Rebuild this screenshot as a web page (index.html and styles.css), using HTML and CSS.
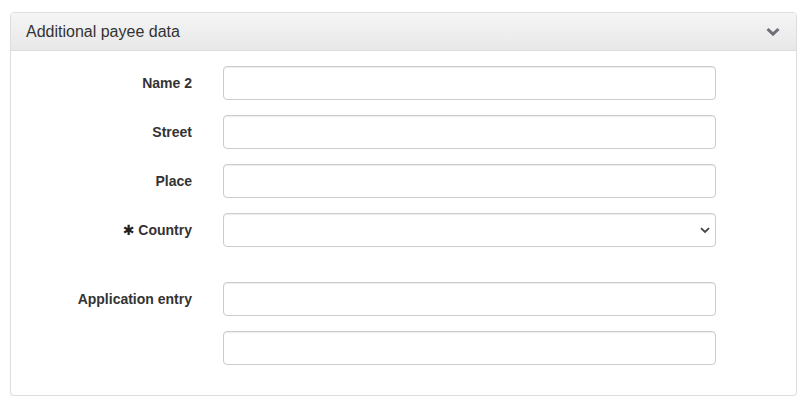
FILE: index.html
```html
<!DOCTYPE html>
<html>
<head>
<meta charset="utf-8">
<link rel="stylesheet" href="styles.css">
</head>
<body>
<div class="panel">
  <div class="panel-heading">
    <span class="panel-title">Additional payee data</span>
    <svg class="toggle" width="14" height="10" viewBox="0 0 14 10"><path d="M1.5 2 L7 7.2 L12.5 2" fill="none" stroke="#6f6f78" stroke-width="3"/></svg>
  </div>
  <div class="panel-body">
    <div class="form-row">
      <label class="lbl">Name 2</label>
      <input class="ctl" type="text">
    </div>
    <div class="form-row">
      <label class="lbl">Street</label>
      <input class="ctl" type="text">
    </div>
    <div class="form-row">
      <label class="lbl">Place</label>
      <input class="ctl" type="text">
    </div>
    <div class="form-row gap-after">
      <label class="lbl"><span class="req">✱</span> Country</label>
      <div class="select-wrap">
        <select class="ctl sel"><option></option></select>
        <svg class="sel-arrow" width="10" height="7" viewBox="0 0 10 7"><path d="M1 1.2 L5 5 L9 1.2" fill="none" stroke="#444" stroke-width="1.8"/></svg>
      </div>
    </div>
    <div class="form-row">
      <label class="lbl">Application entry</label>
      <input class="ctl" type="text">
    </div>
    <div class="form-row">
      <span class="lbl"></span>
      <input class="ctl" type="text">
    </div>
  </div>
</div>
</body>
</html>
```
FILE: styles.css
```css
html, body {
  margin: 0;
  padding: 0;
  background: #fff;
}
body {
  padding: 12px 8px 0 10px;
  font-family: "Liberation Sans", Arial, sans-serif;
  color: #333;
  font-size: 14px;
}
.panel {
  width: 787px;
  box-sizing: border-box;
  border: 1px solid #ddd;
  border-radius: 4px;
  box-shadow: 0 1px 1px rgba(0,0,0,.05);
  background: #fff;
}
.panel-heading {
  display: flex;
  align-items: center;
  justify-content: space-between;
  height: 38px;
  padding: 0 15px;
  box-sizing: border-box;
  background: linear-gradient(to bottom, #f5f5f5 0%, #e8e8e8 100%);
  border-bottom: 1px solid #ddd;
  border-top-left-radius: 3px;
  border-top-right-radius: 3px;
}
.panel-title {
  font-size: 16px;
  color: #333;
  padding-top: 1px;
}
.toggle {
  margin-right: 1px;
  margin-top: 1px;
}
.panel-body {
  padding: 15px 15px 15px 15px;
}
.form-row {
  display: grid;
  grid-template-columns: 166px 493px;
  column-gap: 31px;
  align-items: center;
  margin-bottom: 15px;
}
.form-row.gap-after {
  margin-bottom: 35px;
}
.lbl {
  text-align: right;
  font-weight: bold;
  font-size: 14px;
  color: #333;
}
.req {
  font-family: "DejaVu Sans", sans-serif;
  font-size: 14px;
  font-weight: bold;
  color: #222;
}
.ctl {
  display: block;
  width: 493px;
  height: 34px;
  box-sizing: border-box;
  border: 1px solid #ccc;
  border-radius: 4px;
  background: #fff;
  box-shadow: inset 0 1px 1px rgba(0,0,0,.075);
  padding: 6px 12px;
  font-family: "Liberation Sans", Arial, sans-serif;
  font-size: 14px;
  margin: 0;
}
.select-wrap {
  position: relative;
  width: 493px;
}
.sel {
  appearance: none;
  -webkit-appearance: none;
}
.sel-arrow {
  position: absolute;
  right: 6px;
  top: 14px;
  pointer-events: none;
}
```
